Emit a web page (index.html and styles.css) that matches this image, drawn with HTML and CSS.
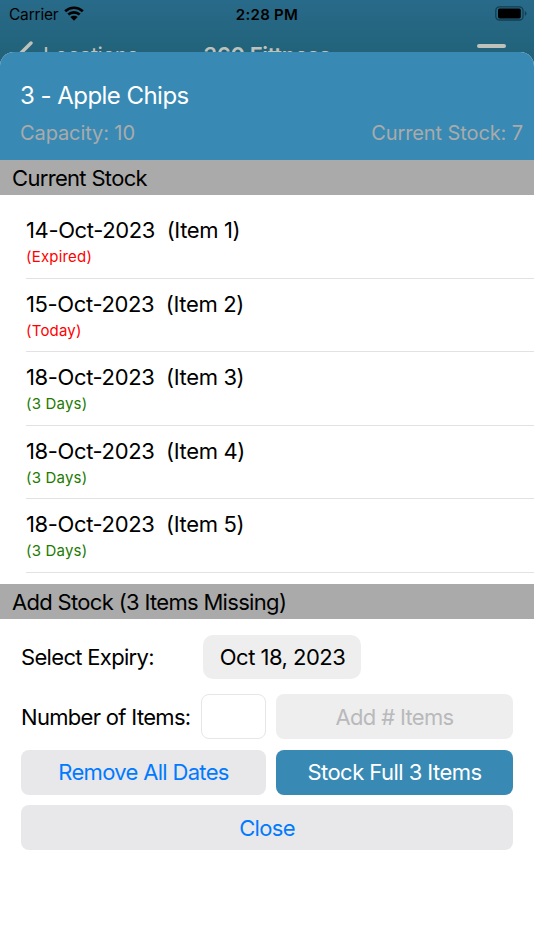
FILE: index.html
```html
<!DOCTYPE html>
<html lang="en">

<head>
    <meta charset="utf-8" />
    <meta name="viewport" content="width=device-width, initial-scale=1" />
    <title>Apple Chips</title>
    <link rel="stylesheet" href="styles.css">
</head>

<body>
    <header class="backdrop">
        <div class="status">
            <div class="carrier">
                <span>Carrier</span>
                <svg class="wifi" viewBox="0 0 20 15">
                    <path d="M1.2 5.2C6.2.6 13.8.6 18.8 5.2M4.3 8.5c3.2-2.9 8.2-2.9 11.4 0" fill="none" stroke="#000" stroke-width="2.7" />
                    <path d="M6.3 11.1c2-1.9 5.4-1.9 7.4 0L10 14.7z" />
                </svg>
            </div>
            <span class="time">2:28 PM</span>
            <svg class="battery" viewBox="0 0 32 15">
                <rect x=".8" y=".8" width="27.2" height="13.2" rx="3.6" fill="none" stroke="#153e50" stroke-width="1.3" />
                <rect x="3" y="2.6" width="22.8" height="9.8" rx="1.6" />
                <path d="M29.8 5q1.7.7 1.7 2.4t-1.7 2.4z" fill="#153e50" />
            </svg>
        </div>
        <nav class="nav">
            <div class="back">
                <svg class="chevron" viewBox="0 0 14 24">
                    <path d="M12 2 2 12l10 10" fill="none" stroke="#bfc1bb" stroke-width="3.4" stroke-linecap="round" />
                </svg>
                <span>Locations</span>
            </div>
            <span class="title">360 Fittness</span>
            <div class="menu"><i></i><i></i><i></i></div>
        </nav>
    </header>

    <main class="sheet">
        <section class="product">
            <h1>3 - Apple Chips</h1>
            <div class="totals">
                <span>Capacity: 10</span>
                <span>Current Stock: 7</span>
            </div>
        </section>

        <h2 class="bar">Current Stock</h2>
        <ul class="stock">
            <li><span class="date">14-Oct-2023&nbsp; (Item 1)</span><span class="due expired">(Expired)</span></li>
            <li><span class="date">15-Oct-2023&nbsp; (Item 2)</span><span class="due today">(Today)</span></li>
            <li><span class="date">18-Oct-2023&nbsp; (Item 3)</span><span class="due">(3 Days)</span></li>
            <li><span class="date">18-Oct-2023&nbsp; (Item 4)</span><span class="due">(3 Days)</span></li>
            <li><span class="date">18-Oct-2023&nbsp; (Item 5)</span><span class="due">(3 Days)</span></li>
        </ul>

        <h2 class="bar">Add Stock (3 Items Missing)</h2>
        <form class="add">
            <div class="expiry">
                <span class="label">Select Expiry:</span>
                <button type="button" class="picker">Oct 18, 2023</button>
            </div>
            <div class="row count">
                <label class="label" for="items">Number of Items:</label>
                <input id="items" class="items" type="text" />
                <button type="button" class="btn" disabled>Add # Items</button>
            </div>
            <div class="row">
                <button type="button" class="btn">Remove All Dates</button>
                <button type="button" class="btn primary">Stock Full 3 Items</button>
            </div>
            <button type="button" class="btn">Close</button>
        </form>
    </main>
</body>

</html>
```
FILE: styles.css
```css
* {
    box-sizing: border-box;
}

body {
    margin: 0;
    background: #fff;
    color: #000;
    font-family: Inter, "Liberation Sans", sans-serif;
    font-size: 22px;
    letter-spacing: -0.68px;
    line-height: 28px;
    overflow: hidden;
}

h1,
h2,
ul {
    margin: 0;
    padding: 0;
    font-weight: 400;
    list-style: none;
}

svg {
    display: block;
}

.backdrop {
    height: 72px;
    background: linear-gradient(#286a89, #22637b 52px);
    overflow: hidden;
}

.status {
    display: grid;
    grid-template-columns: 1fr auto 1fr;
    align-items: center;
    height: 28px;
    padding: 0 7px 0 9px;
    font-size: 15.5px;
    letter-spacing: -0.2px;
}

.carrier {
    display: flex;
    align-items: center;
    gap: 6px;
    padding-top: 1px;
}

.wifi {
    width: 20px;
    height: 15px;
    margin-top: -3px;
}

.time {
    font-weight: 600;
    font-size: 15px;
    letter-spacing: 0.3px;
    margin-left: -2px;
}

.battery {
    width: 32px;
    height: 15px;
    margin-top: -2px;
    justify-self: end;
}

.nav {
    display: grid;
    grid-template-columns: 1fr auto 1fr;
    padding: 13px 28px 0 19px;
    color: #bfc1bb;
}

.back {
    display: flex;
    gap: 10px;
}

.chevron {
    width: 14px;
    height: 24px;
}

.title {
    font-weight: 600;
    letter-spacing: -0.4px;
    margin-left: 9px;
}

.menu {
    display: grid;
    gap: 6px;
    align-content: start;
    justify-self: end;
    padding-top: 3px;
}

.menu i {
    width: 29px;
    height: 4px;
    border-radius: 2px;
    background: #bfc1bb;
}

.sheet {
    position: relative;
    margin-top: -20px;
    min-height: 898px;
    background: #fff;
    border-radius: 14px 14px 0 0;
    overflow: hidden;
}

.product {
    height: 108px;
    padding: 30px 11px 0 20px;
    background: #388ab5;
    color: #fff;
}

.product h1 {
    font-size: 24px;
    letter-spacing: -0.54px;
}

.totals {
    display: flex;
    justify-content: space-between;
    margin-top: 9px;
    font-size: 20px;
    letter-spacing: -0.1px;
    color: #aaa;
}

.bar {
    height: 35px;
    padding: 4px 12px 0;
    background: #aaa;
    font-size: 22px;
}

.stock {
    height: 389.4px;
    padding: 10px 0 0 26px;
}

.stock li {
    display: flex;
    flex-direction: column;
    height: 73.6px;
    padding-top: 11px;
    border-bottom: 1px solid #e2e2e3;
}

.date {
    letter-spacing: -0.37px;
}

.due {
    margin-top: 2px;
    font-size: 15px;
    line-height: 22px;
    letter-spacing: 0.2px;
    color: #227a00;
}

.expired,
.today {
    color: #f00;
}

.add {
    display: flex;
    flex-direction: column;
    gap: 10.4px;
    padding: 15.5px 21px 0;
}

.expiry {
    display: grid;
    grid-template-columns: 182px 158px;
    align-items: center;
    height: 44px;
    margin-bottom: 5px;
}

.row {
    display: grid;
    grid-template-columns: 245px 1fr;
    gap: 10px;
}

.count {
    grid-template-columns: 170px 65px 1fr;
}

.label {
    align-self: center;
    white-space: nowrap;
}

.picker,
.items,
.btn {
    height: 45px;
    padding: 0;
    border: 0;
    border-radius: 8px;
    font: inherit;
    letter-spacing: inherit;
}

.picker {
    height: 44px;
    padding-left: 1px;
    border-radius: 10px;
    background: #eee;
    color: #000;
    letter-spacing: -0.52px;
}

.items {
    width: 65px;
    background: #fff;
    border: 1px solid #e6e6e6;
}

.btn {
    background: #e8e8ea;
    color: #007aff;
}

.btn:disabled {
    background: #eee;
    color: #b9b9bb;
}

.primary {
    background: #388ab5;
    color: #fff;
    letter-spacing: -0.55px;
}
```
